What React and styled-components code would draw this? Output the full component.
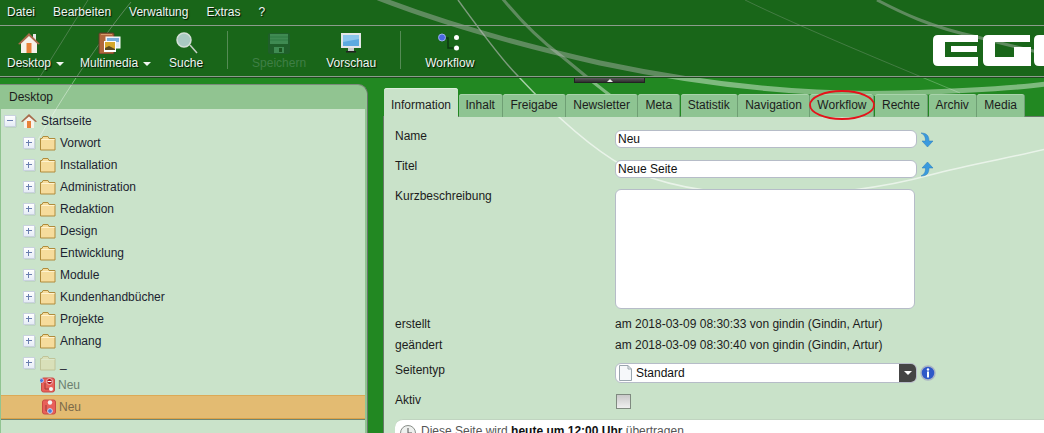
import React from "react";
import styled, { createGlobalStyle } from "styled-components";

const Global = createGlobalStyle`
  html, body { margin: 0; padding: 0; background: #228822; }
  * { box-sizing: border-box; }
`;

const Page = styled.div`
  position: relative;
  width: 1044px;
  height: 433px;
  overflow: hidden;
  background: #228822;
  font: 12px "Liberation Sans", Arial, sans-serif;
  color: #1c1c1c;
`;
const Swoosh = styled.svg`
  position: absolute;
  left: 0;
  top: 0;
  width: 1044px;
  height: 433px;
  pointer-events: none;
`;
const Layer = styled.div`
  position: relative;
  display: flex;
  flex-direction: column;
  height: 100%;
`;
const Header = styled.header`
  height: 78px;
  flex: none;
  background: rgba(0, 0, 0, 0.25);
  border-bottom: 1px solid #1d4a1d;
  color: #eef6f2;
  text-shadow: 1px 1px 1px rgba(0, 0, 0, 0.85);
`;
const MenuBar = styled.nav`
  height: 26px;
  display: flex;
  align-items: center;
  gap: 18px;
  padding: 0 7px 2px;
  border-bottom: 1px solid #8c9c8c;
`;
const MenuItem = styled.span``;
const Toolbar = styled.div`
  height: 51px;
  display: flex;
  padding-left: 7px;
  border-bottom: 1px solid #8c9c8c;
`;
const Tool = styled.div`
  display: flex;
  flex-direction: column;
  align-items: center;
  padding-top: 6px;
  margin-right: ${(p) => p.$gap}px;
  color: ${(p) => (p.$off ? "#3f7f45" : "inherit")};
  text-shadow: ${(p) => (p.$off ? "none" : "inherit")};
`;
const ToolIcon = styled.svg`
  width: 24px;
  height: 22px;
  margin-right: ${(p) => p.$shift || 0}px;
  flex: none;
`;
const ToolLabel = styled.div`
  display: flex;
  align-items: center;
  margin-top: 2px;
  line-height: 14px;
  white-space: nowrap;
`;
const Caret = styled.i`
  width: 0;
  height: 0;
  margin: 1px 0 0 5px;
  border: 4px solid transparent;
  border-top: 4px solid #f2f6f2;
  border-bottom: 0;
`;
const Divider = styled.div`
  width: 1px;
  height: 38px;
  margin: 5px 24px 0 0;
  background: rgba(160, 185, 160, 0.45);
`;
const Logo = styled.svg`
  width: 111px;
  height: 31px;
  margin: 9px 0 0 auto;
  flex: none;
`;
const Handle = styled.div`
  position: absolute;
  left: 574px;
  top: 78px;
  width: 71px;
  height: 5px;
  display: flex;
  justify-content: center;
  background: linear-gradient(#5a5a5a, #2f2f2f);
  border: 1px solid #222;
  border-top: 0;
  &::after {
    content: "";
    border: 3.5px solid transparent;
    border-bottom: 3px solid #eee;
    border-top: 0;
  }
`;
const Main = styled.main`
  flex: 1;
  min-height: 0;
  display: flex;
`;
const TreePanel = styled.aside`
  width: 368px;
  flex: none;
  margin-top: 6px;
  border-radius: 0 10px 0 0;
  border-top: 1px solid #7c8a7c;
  border-right: 1px solid #66766a;
  background: rgba(255, 255, 255, 0.5);
  padding: 0 1px;
  display: flex;
  flex-direction: column;
`;
const TreeTitle = styled.div`
  height: 24px;
  flex: none;
  line-height: 25px;
  padding-left: 8px;
`;
const TreeBody = styled.div`
  flex: 1;
  margin-right: 1px;
  background: rgba(255, 255, 255, 0.52);
`;
const TreeRow = styled.div`
  height: ${(p) => p.$h || 22}px;
  display: flex;
  align-items: center;
  padding-left: ${(p) => p.$indent}px;
  color: ${(p) => p.$color || "#1c2430"};
`;
const SelectedRow = styled.div`
  height: 24px;
  margin-top: -1px;
  display: flex;
  align-items: center;
  padding-left: 40px;
  color: #7b6a49;
  background: #e3bb72;
  border-top: 1px solid #dca956;
  border-bottom: 1px solid #dba34a;
  box-shadow: 0 1px 0 #6f8672;
`;
const Toggle = styled.span`
  width: 10px;
  height: 10px;
  flex: none;
  position: relative;
  background: linear-gradient(#fff, #e6ecf6);
  box-shadow: 0 0 0 1px #c9d2de, 1px 1px 1px rgba(80, 90, 110, 0.5);
  margin-right: ${(p) => p.$gap}px;
  &::before {
    content: "";
    position: absolute;
    left: 2px;
    top: 4px;
    width: 6px;
    height: 1px;
    background: #6a7fb0;
  }
  &::after {
    content: "";
    display: ${(p) => (p.$open ? "none" : "block")};
    position: absolute;
    left: 4px;
    top: 2px;
    width: 1px;
    height: 6px;
    background: #6a7fb0;
  }
`;
const TreeIcon = styled.svg`
  width: 16px;
  height: 16px;
  flex: none;
  margin-right: ${(p) => p.$gap}px;
  opacity: ${(p) => p.$fade || 1};
`;
const RightPane = styled.section`
  flex: 1;
  min-width: 0;
  margin: 10px 0 0 15px;
  display: flex;
  flex-direction: column;
`;
const TabBar = styled.div`
  height: 29px;
  flex: none;
  display: flex;
  align-items: flex-end;
  gap: 0.5px;
  padding-left: 1px;
  margin-bottom: -1px;
  position: relative;
`;
const Tab = styled.div`
  position: relative;
  height: ${(p) => (p.$active ? 29 : 23)}px;
  padding: ${(p) => (p.$active ? "7px" : "1px")} 7px 0;
  line-height: 21px;
  white-space: nowrap;
  border-radius: 3px 3px 0 0;
  background: ${(p) => (p.$active ? "#c9e2c9" : "#8ec492")};
  box-shadow: inset 0 1px 0 ${(p) => (p.$active ? "#dcefdc" : "#a9d4ab")};
  border-right: ${(p) => (p.$active ? "0" : "1px solid #6f9f74")};
  z-index: ${(p) => (p.$active ? 2 : 0)};
`;
const Ring = styled.svg`
  position: absolute;
  left: -1px;
  top: -4px;
  width: 68px;
  height: 32px;
  overflow: visible;
`;
const Content = styled.div`
  flex: 1;
  min-height: 0;
  background: rgba(255, 255, 255, 0.756);
  border-top: 1px solid #667a68;
  border-left: 1px solid #667a68;
  padding: 13px 0 0 11px;
  overflow: hidden;
`;
const Row = styled.div`
  height: ${(p) => p.$h}px;
  display: flex;
  align-items: flex-start;
`;
const Label = styled.div`
  width: 220px;
  flex: none;
  line-height: 12px;
  margin-top: ${(p) => p.$dy || 0}px;
`;
const Value = styled.div`
  line-height: 12px;
  margin-top: 2px;
  color: #1c1c1c;
`;
const TextField = styled.input`
  width: 302px;
  height: 18px;
  padding: 0 2px;
  border: 1px solid #b6bcc8;
  border-radius: 6px;
  background: #fff;
  font: 12px "Liberation Sans", Arial, sans-serif;
  color: #111;
  outline: none;
`;
const TextArea = styled.textarea`
  width: 300px;
  height: 120px;
  border: 1px solid #b6bcc8;
  border-radius: 6px;
  background: #fff;
  resize: none;
  outline: none;
`;
const SideIcon = styled.svg`
  width: ${(p) => p.$size || 14}px;
  height: 16px;
  margin: ${(p) => p.$top || 1}px 0 0 ${(p) => p.$left || 3}px;
  flex: none;
`;
const SelectBox = styled.div`
  width: 302px;
  height: 20px;
  display: flex;
  align-items: center;
  border: 1px solid #b6bcc8;
  border-radius: 6px;
  background: #fff;
  overflow: hidden;
  color: #111;
  padding-left: 3px;
`;
const PageIcon = styled.svg`
  width: 13px;
  height: 16px;
  margin-right: 4px;
  flex: none;
`;
const SelectText = styled.span`
  flex: 1;
`;
const SelectButton = styled.span`
  width: 17px;
  height: 100%;
  background: #454545;
  display: flex;
  align-items: center;
  justify-content: center;
  &::after {
    content: "";
    border: 4px solid transparent;
    border-top: 4px solid #fff;
    border-bottom: 0;
  }
`;
const Check = styled.div`
  width: 15px;
  height: 15px;
  margin-left: 1px;
  border: 1px solid #7f8a80;
  background: linear-gradient(#c9c9c9, #efefef);
`;
const InfoBar = styled.div`
  height: 30px;
  border-radius: 8px 0 0 0;
  background: #fff;
  border-top: 1px solid #c0d4c0;
  display: flex;
  align-items: flex-start;
  padding: 4px 0 0 4px;
  color: #555;
  white-space: nowrap;
  b {
    color: #111;
  }
`;
const ClockIcon = styled.svg`
  width: 18px;
  height: 18px;
  margin-right: 4px;
  flex: none;
`;

const Folder = ({ fade }) => (
  <TreeIcon viewBox="0 0 16 16" $gap={4} $fade={fade}>
    <path d="M.5 3.500V15h14.500V3.500H9L8 1.500H3L2 3.500z" fill="#f6dc9c" stroke="#b08c3c" />
    <path d="M1.500 4.500h13" stroke="#fff3cf" />
  </TreeIcon>
);

const RedNode = ({ selected }) => (
  <TreeIcon viewBox="0 0 16 16" $gap={2}>
    <rect x="1.500" y="1" width="13" height="14" rx="2" fill="#e8605a" stroke="#c94a44" />
    <path d="M5 6v6h4" stroke="#a03a36" fill="none" />
    {selected ? (
      <>
        <circle cx="9" cy="3.500" r="2.200" fill="#f4f4f4" />
        <circle cx="9" cy="12" r="2.400" fill="#4c7ad8" stroke="#cdd9f2" />
      </>
    ) : (
      <>
        <circle cx="9.500" cy="4.500" r="3" fill="#b0141c" stroke="#f2c0c0" />
        <rect x="7.500" y="4" width="4" height="1" fill="#fff" />
        <circle cx="11" cy="12" r="2" fill="#f4f4f4" />
        <circle cx="1.500" cy="3.500" r="2" fill="#4c7ad8" stroke="#b8c8ec" />
      </>
    )}
  </TreeIcon>
);

const tabs = ["Information", "Inhalt", "Freigabe", "Newsletter", "Meta", "Statistik", "Navigation", "Workflow", "Rechte", "Archiv", "Media"];
const folders = ["Vorwort", "Installation", "Administration", "Redaktion", "Design", "Entwicklung", "Module", "Kundenhandbücher", "Projekte", "Anhang"];

export default function App() {
  return (
    <Page>
      <Global />
      <Swoosh viewBox="0 0 1044 433" fill="none" stroke="#fff">
        <path d="M378 -2 C 440 22 520 45 600 63 C 700 84 800 96 900 93 C 960 91 1010 89 1046 84" strokeWidth="5" strokeOpacity=".42" />
        <path d="M502 -2 C 520 20 540 40 560 55 C 585 75 610 98 640 116" strokeWidth="3" strokeOpacity=".42" />
        <path d="M458 0 C 480 30 500 58 517 75 C 545 105 585 145 625 167 C 700 205 840 200 930 175 C 970 164 1010 158 1046 149" strokeWidth="1.500" strokeOpacity=".6" />
        <path d="M877 0 C 900 12 930 27 977 37 C 1000 43 1020 48 1046 54" strokeWidth="3" strokeOpacity=".42" />
        <path d="M745 0 C 800 27 900 68 960 93" strokeWidth="1" strokeOpacity=".25" />
        <path d="M88 0 L38 80" strokeWidth="1" strokeOpacity=".3" />
        <path d="M131 2 C 100 40 60 100 38 140" strokeWidth="1" strokeOpacity=".4" />
      </Swoosh>
      <Layer>
        <Header>
          <MenuBar>
            {["Datei", "Bearbeiten", "Verwaltung", "Extras", "?"].map((m) => (
              <MenuItem key={m}>{m}</MenuItem>
            ))}
          </MenuBar>
          <Toolbar>
            <Tool $gap={16}>
              <ToolIcon viewBox="0 0 24 22" $shift={13}>
                <rect x="16" y="2" width="3" height="6" fill="#e8e8e8" />
                <path d="M4 10 12 3l8 7v11H4z" fill="#f6f2ea" />
                <path d="M1 12 12 1l11 11-2 .5L12 4 3 12.500z" fill="#a86a4a" />
                <rect x="9.500" y="11" width="5" height="10" fill="#e88238" />
              </ToolIcon>
              <ToolLabel>Desktop<Caret /></ToolLabel>
            </Tool>
            <Tool $gap={18}>
              <ToolIcon viewBox="0 0 24 22" $shift={13}>
                <rect x="2" y="1" width="15" height="21" rx="1" fill="#b0683c" stroke="#5a3a28" />
                <path d="M4 2.500h11" stroke="#d89a6c" />
                <rect x="9" y="5" width="14" height="11" fill="#dfeaf6" stroke="#fff" />
                <rect x="10" y="6" width="12" height="4" fill="#7aaedc" />
                <rect x="7" y="9" width="12" height="11" fill="#fff" />
                <rect x="8" y="10" width="10" height="8" fill="#d4a82c" />
                <path d="M8 16l4-2 6 3v1H8z" fill="#5a4a20" />
              </ToolIcon>
              <ToolLabel>Multimedia<Caret /></ToolLabel>
            </Tool>
            <Tool $gap={24}>
              <ToolIcon viewBox="0 0 24 22">
                <path d="M16 13l7 8" stroke="#c6d0c8" strokeWidth="1.500" />
                <circle cx="10" cy="8" r="7" fill="#a9c9c2" stroke="#d4dfd8" strokeWidth="1.500" />
              </ToolIcon>
              <ToolLabel>Suche</ToolLabel>
            </Tool>
            <Divider />
            <Tool $gap={20} $off>
              <ToolIcon viewBox="0 0 24 22">
                <rect x="1" y="1" width="22" height="21" rx="2" fill="#1f5f2a" />
                <rect x="3" y="2" width="18" height="10" fill="#3f8a52" />
                <path d="M3 5h18M3 8h18" stroke="#2f7a42" />
                <rect x="7" y="15" width="10" height="6" fill="#3f8a52" />
                <rect x="12" y="16" width="3" height="4" fill="#1a551f" />
              </ToolIcon>
              <ToolLabel>Speichern</ToolLabel>
            </Tool>
            <Tool $gap={24}>
              <ToolIcon viewBox="0 0 24 22">
                <rect x="2" y="1" width="20" height="15" fill="#e4e6e8" />
                <rect x="4" y="3" width="16" height="11" fill="#5caae0" />
                <path d="M4 3h16v4L4 10z" fill="#8cc6ee" />
                <rect x="9" y="16" width="6" height="3" fill="#c8cacc" />
                <rect x="7" y="19" width="10" height="1.500" fill="#222" />
              </ToolIcon>
              <ToolLabel>Vorschau</ToolLabel>
            </Tool>
            <Divider />
            <Tool $gap={0}>
              <ToolIcon viewBox="0 0 24 22">
                <path d="M7 6h3v10h5" stroke="#0e3a12" strokeWidth="1.500" fill="none" />
                <circle cx="4" cy="5.500" r="3.500" fill="#4a68e0" stroke="#9db0f0" />
                <circle cx="18.500" cy="5.500" r="2.500" fill="#fff" />
                <circle cx="18.500" cy="16" r="2.500" fill="#fff" />
              </ToolIcon>
              <ToolLabel>Workflow</ToolLabel>
            </Tool>
            <Logo viewBox="0 0 111 31">
              <path fill="#fff" fillRule="evenodd" d="M5 0H45V7H12V22H45V31H5Q0 31 0 26V5Q0 0 5 0ZM18 11H44V17H18Z" />
              <path fill="#fff" d="M55 0H97V7H62V22H81V12H98V31H55Q50 31 50 26V5Q50 0 55 0Z" />
              <path fill="#fff" d="M106 0H111V31H106Q101 31 101 26V5Q101 0 106 0Z" />
            </Logo>
          </Toolbar>
        </Header>
        <Handle />
        <Main>
          <TreePanel>
            <TreeTitle>Desktop</TreeTitle>
            <TreeBody>
              <TreeRow $indent={4} $h={23}>
                <Toggle $open $gap={6} />
                <TreeIcon viewBox="0 0 16 16" $gap={4}>
                  <path d="M3 8l5-5 5 5v7H3z" fill="#f8f2ea" />
                  <path d="M0 8.500 8 1l8 7.500-1.500.5L8 3.500 1.500 9z" fill="#a86a4a" />
                  <rect x="6" y="8" width="4" height="7" fill="#e88238" />
                </TreeIcon>
                Startseite
              </TreeRow>
              {folders.map((f) => (
                <TreeRow key={f} $indent={23}>
                  <Toggle $gap={6} />
                  <Folder />
                  {f}
                </TreeRow>
              ))}
              <TreeRow $indent={23}>
                <Toggle $gap={6} />
                <Folder fade={0.35} />
                _
              </TreeRow>
              <TreeRow $indent={39} $color="#6c7f70">
                <RedNode />
                Neu
              </TreeRow>
              <SelectedRow>
                <RedNode selected />
                Neu
              </SelectedRow>
            </TreeBody>
          </TreePanel>
          <RightPane>
            <TabBar>
              {tabs.map((t, i) => (
                <Tab key={t} $active={i === 0}>
                  {t}
                  {t === "Workflow" && (
                    <Ring viewBox="0 0 68 32" fill="none">
                      <ellipse cx="33" cy="15" rx="32" ry="14" stroke="#e5121a" strokeWidth="1.800" />
                    </Ring>
                  )}
                </Tab>
              ))}
            </TabBar>
            <Content>
              <Row $h={30}>
                <Label>Name</Label>
                <TextField readOnly value="Neu" />
                <SideIcon viewBox="0 0 14 16" $top={2}>
                  <path d="M1 1c6 0 8 3 8 8h4l-5.500 6L2 9h3.500C5.500 6 5 3 1 1z" fill="#3a9ade" stroke="#2a7ab8" strokeWidth=".5" />
                </SideIcon>
              </Row>
              <Row $h={29}>
                <Label>Titel</Label>
                <TextField readOnly value="Neue Seite" />
                <SideIcon viewBox="0 0 14 16" $top={1}>
                  <path d="M1 15c6 0 8-3 8-8h4L7.500 1 2 7h3.500C5.500 10 5 13 1 15z" fill="#3a9ade" stroke="#2a7ab8" strokeWidth=".5" />
                </SideIcon>
              </Row>
              <Row $h={127}>
                <Label $dy={1}>Kurzbeschreibung</Label>
                <TextArea readOnly />
              </Row>
              <Row $h={21}>
                <Label $dy={2}>erstellt</Label>
                <Value>am 2018-03-09 08:30:33 von gindin (Gindin, Artur)</Value>
              </Row>
              <Row $h={26}>
                <Label $dy={2}>geändert</Label>
                <Value>am 2018-03-09 08:30:40 von gindin (Gindin, Artur)</Value>
              </Row>
              <Row $h={31}>
                <Label $dy={1}>Seitentyp</Label>
                <SelectBox>
                  <PageIcon viewBox="0 0 13 16">
                    <path d="M.5.500H9L12.500 4V15.500H.5z" fill="#f6f8fa" stroke="#9aa6ae" />
                    <path d="M9 .5V4h3.500" fill="none" stroke="#9aa6ae" />
                  </PageIcon>
                  <SelectText>Standard</SelectText>
                  <SelectButton />
                </SelectBox>
                <SideIcon viewBox="0 0 16 16" $size={16} $top={2} $left={3}>
                  <circle cx="8" cy="8" r="7" fill="#2f58c8" stroke="#aab4c4" strokeWidth="1.500" />
                  <circle cx="8" cy="4.500" r="1.200" fill="#fff" />
                  <rect x="7" y="6.500" width="2" height="6" fill="#fff" />
                </SideIcon>
              </Row>
              <Row $h={25}>
                <Label>Aktiv</Label>
                <Check />
              </Row>
              <InfoBar>
                <ClockIcon viewBox="0 0 18 18">
                  <circle cx="9" cy="9" r="7.500" fill="#eef0ee" stroke="#8a8f8a" />
                  <path d="M9 4v5h4" fill="none" stroke="#555" />
                </ClockIcon>
                <span>Diese Seite wird <b>heute um 12:00 Uhr</b> übertragen</span>
              </InfoBar>
            </Content>
          </RightPane>
        </Main>
      </Layer>
    </Page>
  );
}
